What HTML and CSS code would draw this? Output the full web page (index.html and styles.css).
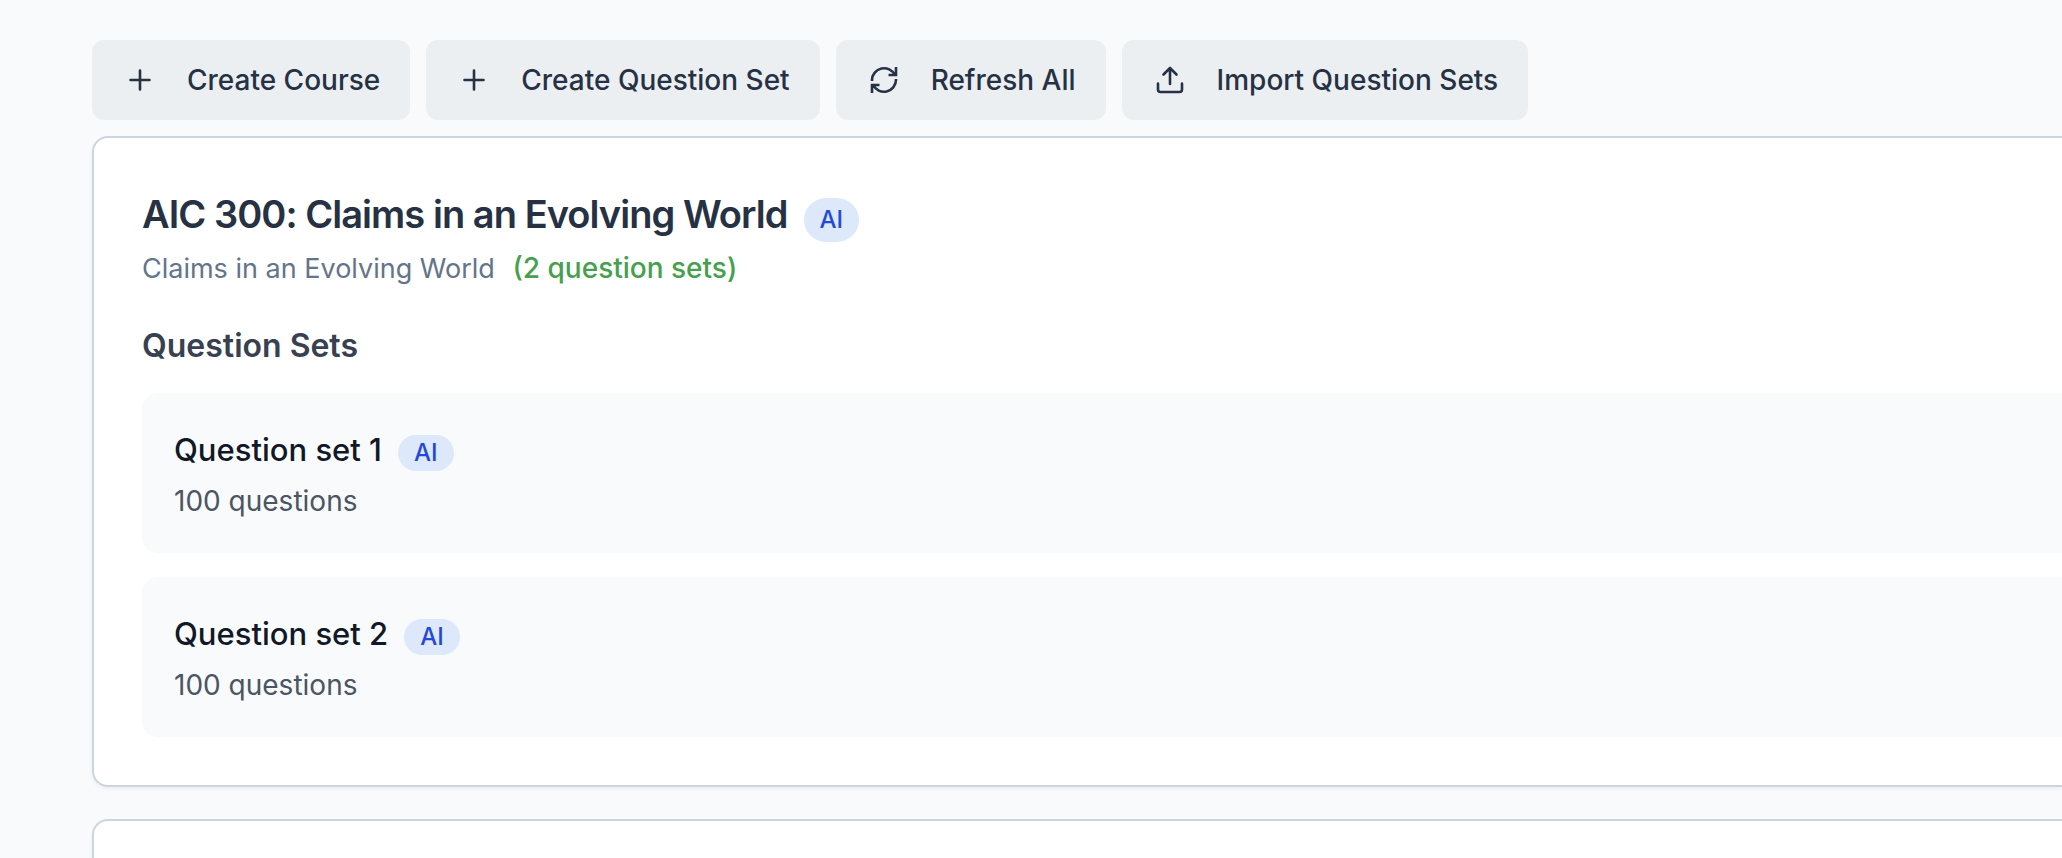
FILE: index.html
```html
<!DOCTYPE html>
<html lang="en">
<head>
<meta charset="utf-8">
<title>Courses</title>
<link rel="stylesheet" href="styles.css">
</head>
<body>
<main class="page">
  <div class="toolbar">
    <button type="button" class="btn">
      <svg class="icon" viewBox="0 0 32 32" aria-hidden="true"><path d="M16 6.500v19M6.500 16h19"/></svg>
      Create Course
    </button>
    <button type="button" class="btn">
      <svg class="icon" viewBox="0 0 32 32" aria-hidden="true"><path d="M16 6.500v19M6.500 16h19"/></svg>
      Create Question Set
    </button>
    <button type="button" class="btn">
      <svg class="icon icon-square" viewBox="0 0 32 32" aria-hidden="true"><path d="M4 17v-1A12 12 0 0 1 26.800 11M28 3v8h-7.500M28 15v1A12 12 0 0 1 5.200 21M4 29v-8h7.500"/></svg>
      Refresh All
    </button>
    <button type="button" class="btn">
      <svg class="icon" viewBox="0 0 32 32" aria-hidden="true"><path d="M16 20V4M9.500 10.500L16 4l6.500 6.500M4 19.500v6a2.500 2.500 0 0 0 2.500 2.500h19a2.500 2.500 0 0 0 2.500-2.500v-6"/></svg>
      Import Question Sets
    </button>
  </div>

  <div class="courses">
    <article class="card">
      <div class="title-row">
        <h2 class="title">AIC 300: Claims in an Evolving World</h2>
        <span class="badge badge-tall">AI</span>
      </div>
      <p class="subtitle">Claims in an Evolving World <span class="count">(2 question sets)</span></p>
      <h3 class="section-title">Question Sets</h3>
      <ul class="sets">
        <li class="set">
          <div class="title-row">
            <h4 class="set-name">Question set 1</h4>
            <span class="badge">AI</span>
          </div>
          <p class="set-meta">100 questions</p>
        </li>
        <li class="set">
          <div class="title-row">
            <h4 class="set-name">Question set 2</h4>
            <span class="badge">AI</span>
          </div>
          <p class="set-meta">100 questions</p>
        </li>
      </ul>
    </article>
    <article class="card"></article>
  </div>
</main>
</body>
</html>
```
FILE: styles.css
```css
* {
  box-sizing: border-box;
}

body,
h2,
h3,
h4,
p,
ul {
  margin: 0;
  padding: 0;
}

body {
  background: #f9fafc;
  font-family: Inter, "Liberation Sans", sans-serif;
  font-size: 28px;
  line-height: 40px;
}

.page {
  height: 100vh;
  overflow: hidden;
  padding: 40px 0 0 92px;
}

.toolbar {
  display: flex;
  gap: 16px;
  margin-bottom: 16px;
}

.btn {
  display: flex;
  align-items: center;
  gap: 31px;
  padding: 20px 30px 20px 32px;
  border: 0;
  border-radius: 12px;
  background: #ebeff2;
  color: #263244;
  font: inherit;
  font-weight: 500;
  white-space: nowrap;
}

.icon {
  width: 32px;
  height: 32px;
  fill: none;
  stroke: currentColor;
  stroke-width: 2.6;
  stroke-linecap: round;
  stroke-linejoin: round;
}

.icon-square {
  stroke-linecap: butt;
  stroke-linejoin: miter;
}

.courses {
  display: grid;
  gap: 32px;
}

.card {
  padding: 48px 0 48px 48px;
  border: 2px solid #cbd5e1;
  border-right: 0;
  border-radius: 16px 0 0 16px;
  background: #fff;
  box-shadow: 0 2px 4px rgba(0, 0, 0, 0.05);
}

.title-row {
  display: flex;
  align-items: baseline;
  gap: 16px;
  margin-bottom: 6px;
}

.title {
  color: #263244;
  font-size: 38px;
  font-weight: 600;
  line-height: 56px;
  letter-spacing: -0.025em;
}

.badge {
  padding: 4px 16px;
  border-radius: 22px;
  background: #dde8fb;
  color: #2548d8;
  font-size: 24px;
  font-weight: 500;
  line-height: 28px;
}

.badge-tall {
  line-height: 36px;
}

.subtitle {
  color: #64748b;
  font-size: 27px;
}

.count {
  margin-left: 10px;
  color: #46a04d;
  font-size: 28px;
  font-weight: 500;
}

.section-title {
  margin: 32px 0 22px;
  color: #374151;
  font-size: 32px;
  font-weight: 600;
  line-height: 50px;
}

.sets {
  display: grid;
  gap: 24px;
  list-style: none;
}

.set {
  padding: 32px;
  border-radius: 16px 0 0 16px;
  background: #f9fafc;
}

.set-name {
  color: #111827;
  font-size: 31px;
  font-weight: 500;
  line-height: 50px;
}

.set-meta {
  color: #4b5563;
}
```
